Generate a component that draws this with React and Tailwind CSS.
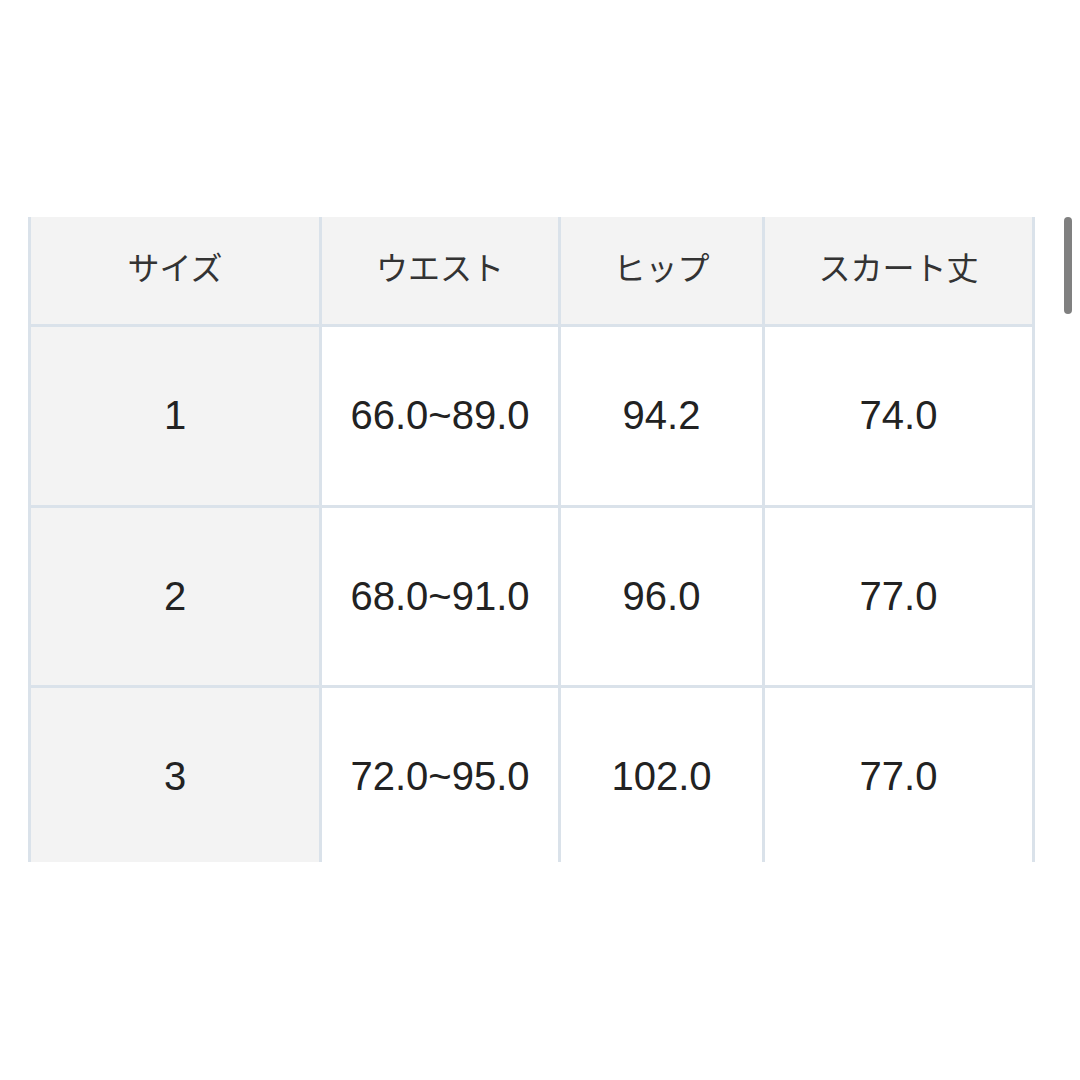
const headers = ["サイズ", "ウエスト", "ヒップ", "スカート丈"]

const rows = [
  ["1", "66.0~89.0", "94.2", "74.0"],
  ["2", "68.0~91.0", "96.0", "77.0"],
  ["3", "72.0~95.0", "102.0", "77.0"],
]

const cellBorder = (i) =>
  i === 3 ? "border-l-[3px] border-r-[3px] border-[#dae2ea]" : "border-l-[3px] border-[#dae2ea]"

const App = () => {
  return (
    <div className="w-[1080px] h-[1080px] bg-white pt-[217px] pl-[28px] flex items-start">
      <div className="w-[1007px] h-[645px] overflow-hidden">
        <div className="grid grid-cols-[291px_239px_204px_273px] grid-rows-[110px_181px_180px_180px]">
          {headers.map((h, i) => (
            <div
              key={h}
              className={`${cellBorder(i)} border-b-[3px] bg-[#f3f3f3] flex items-center justify-center pb-[10px] text-[32px] text-[#333333] font-["Noto_Sans_CJK_JP",sans-serif]`}
            >
              {h}
            </div>
          ))}
          {rows.map((r, ri) =>
            r.map((v, i) => (
              <div
                key={ri + "-" + i}
                className={`${cellBorder(i)} border-b-[3px] ${i === 0 ? "bg-[#f3f3f3]" : "bg-white"} flex items-center justify-center pb-[2px] text-[40px] text-[#222222] font-["Liberation_Sans",Arial,sans-serif]`}
              >
                {v}
              </div>
            ))
          )}
        </div>
      </div>
      <div className="ml-[29px] w-[8px] h-[97px] rounded-full bg-[#808080]"></div>
    </div>
  )
}

export default App
